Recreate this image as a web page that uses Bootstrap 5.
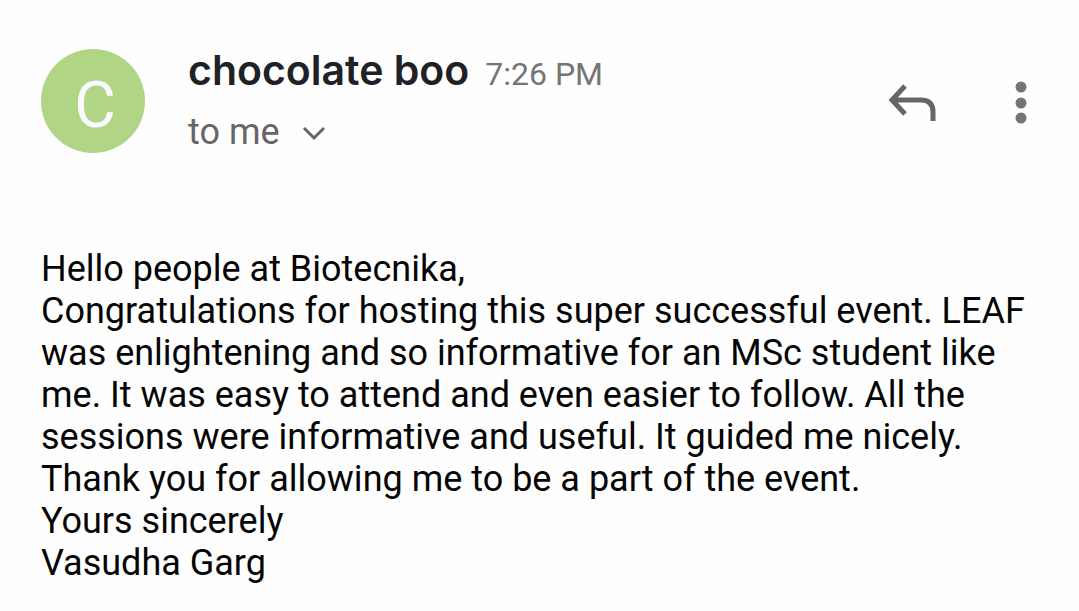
<!DOCTYPE html>
<html lang="en">
<head>
<meta charset="utf-8">
<meta name="viewport" content="width=device-width, initial-scale=1">
<title>Message from chocolate boo</title>
<link href="https://cdn.jsdelivr.net/npm/bootstrap@5.3.0/dist/css/bootstrap.min.css" rel="stylesheet">
<style>
  body { font-family: Roboto, sans-serif; background: #fefefe; color: #050505; }
  .message { padding: 49px 40px 24px 41px; }
  .message-head { gap: 43px; }
  .avatar { width: 104px; height: 104px; padding: 10px 0 0 4px; background: #afd585; color: #fafafa; font-size: 64px; line-height: 1; }
  .sender { font-family: Inter, sans-serif; font-size: 41px; line-height: 42px; font-weight: 600; color: #202124; }
  .sent-at { font-size: 32px; line-height: 42px; color: #757575; }
  .recipients { font-size: 36px; line-height: 48px; color: #666; margin-top: 13px; }
  .actions { gap: 78px; padding-right: 12px; }
  .plain { color: #666; line-height: 1; }
  .dots { color: #757575; }
  .message-text { margin-top: 92px; font-size: 36px; line-height: 42px; }
</style>
</head>
<body>
<main class="message">
  <header class="message-head d-flex align-items-start">
    <div class="avatar rounded-circle d-flex align-items-center justify-content-center flex-shrink-0">C</div>
    <div class="flex-grow-1">
      <div class="d-flex align-items-baseline gap-3">
        <h1 class="sender m-0">chocolate boo</h1>
        <time class="sent-at">7:26 PM</time>
      </div>
      <button type="button" class="recipients btn p-0 border-0 d-flex align-items-center gap-3">to me
        <svg width="34" height="24" viewBox="0 0 34 24" fill="none" stroke="currentColor" stroke-width="3" aria-hidden="true"><path d="M8 8l10 10L28 8"/></svg>
      </button>
    </div>
    <div class="actions d-flex align-self-center">
      <button type="button" class="plain btn p-0 border-0" aria-label="Reply"><svg width="50" height="44" viewBox="0 0 50 44" fill="none" stroke="currentColor" stroke-width="5" aria-hidden="true"><path d="M18 5L5 19L18 33M5 19H34Q46 19 46 31V40"/></svg></button>
      <button type="button" class="plain dots btn p-0 border-0" aria-label="More options"><svg width="12" height="44" viewBox="0 0 12 44" fill="currentColor" aria-hidden="true"><circle cx="6" cy="6" r="5.500"/><circle cx="6" cy="22" r="5.500"/><circle cx="6" cy="37" r="5.500"/></svg></button>
    </div>
  </header>
  <div class="message-text">Hello people at Biotecnika,<br>
    Congratulations for hosting this super successful event. LEAF was enlightening and so informative for an MSc student like me. It was easy to attend and even easier to follow. All the sessions were informative and useful. It guided me nicely. Thank you for allowing me to be a part of the event.<br>
    Yours sincerely<br>
    Vasudha Garg</div>
</main>
<script src="https://cdn.jsdelivr.net/npm/bootstrap@5.3.0/dist/js/bootstrap.bundle.min.js"></script>
</body>
</html>
